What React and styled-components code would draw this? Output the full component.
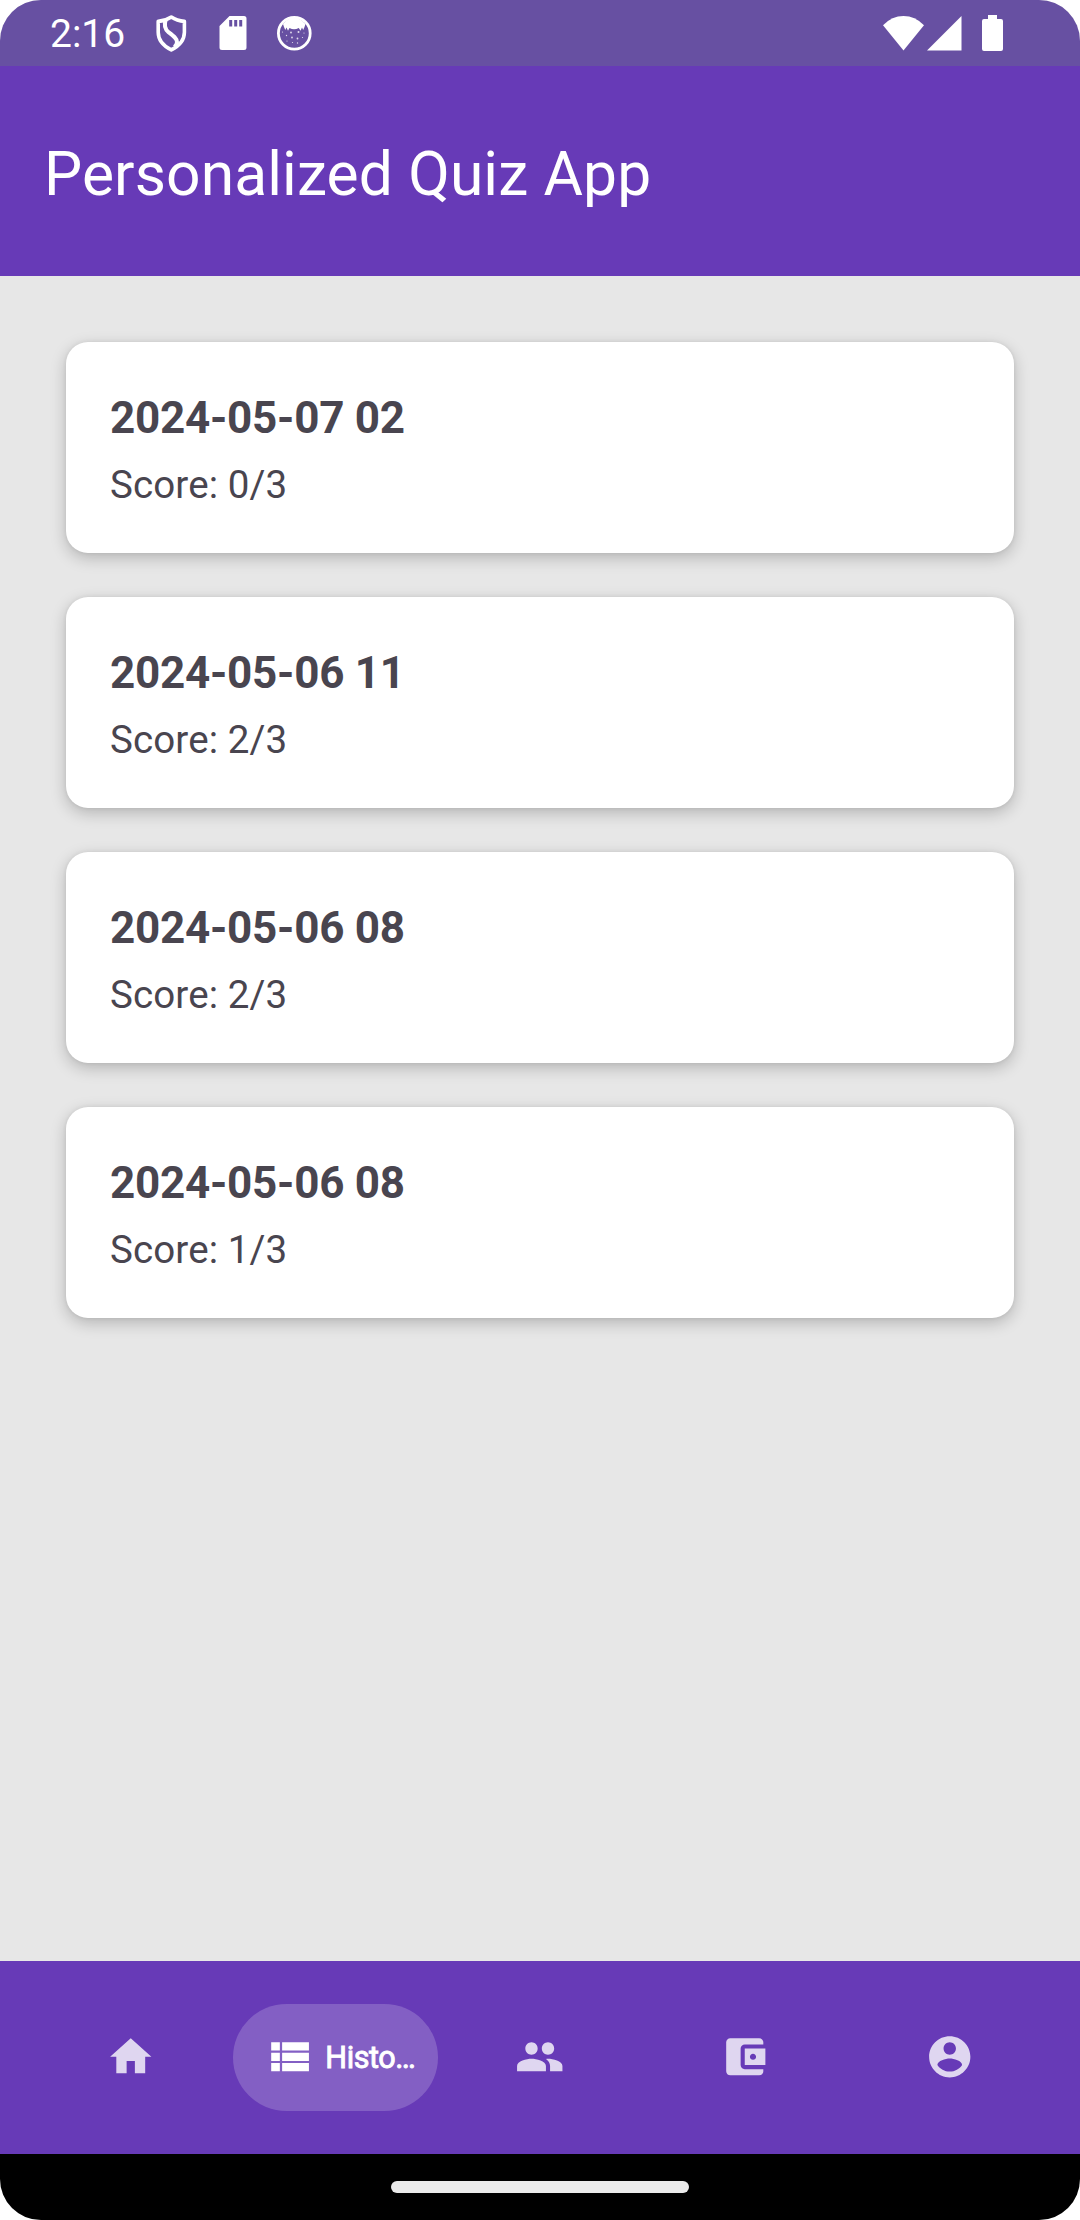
import React from "react";
import styled, { createGlobalStyle } from "styled-components";

const GlobalStyle = createGlobalStyle`
  * { box-sizing: border-box; }
  body { margin: 0; background: #ffffff; font-family: Roboto, "Liberation Sans", sans-serif; }
`;

const Screen = styled.div`
  width: 1080px;
  height: 2220px;
  display: flex;
  flex-direction: column;
  overflow: hidden;
  border-radius: 41px;
  background: #e7e7e7;
`;

const StatusBar = styled.header`
  height: 66px;
  flex: none;
  display: flex;
  align-items: center;
  justify-content: space-between;
  padding: 0 77px 0 50px;
  background: #6750a2;
  color: #ffffff;
`;

const StatusGroup = styled.div`
  display: flex;
  align-items: center;
`;

const Clock = styled.span`
  width: 105px;
  font-size: 39px;
  line-height: 46px;
  padding-top: 2px;
`;

const StatusIcon = styled.svg`
  display: block;
  width: ${(p) => p.$w}px;
  height: ${(p) => p.$h}px;
  margin-left: ${(p) => p.$gap || 0}px;
`;

const AppBar = styled.div`
  height: 210px;
  flex: none;
  display: flex;
  align-items: center;
  padding: 8px 44px 0;
  background: #673ab7;
`;

const Title = styled.h1`
  margin: 0;
  font-size: 60.5px;
  font-weight: 400;
  line-height: 72px;
  letter-spacing: 0.12px;
  color: #ffffff;
`;

const HistoryList = styled.main`
  flex: 1;
  display: flex;
  flex-direction: column;
  gap: 44px;
  padding: 66px;
`;

const Card = styled.article`
  height: 211px;
  padding: 50px 44px 0;
  border-radius: 22px;
  background: #ffffff;
  color: #49454f;
  box-shadow: 0 5px 16px rgba(0, 0, 0, 0.22), 0 0 4px rgba(0, 0, 0, 0.07);
`;

const CardDate = styled.h2`
  margin: 0;
  font-size: 44px;
  font-weight: 700;
  line-height: 52px;
  letter-spacing: -0.25px;
`;

const CardScore = styled.p`
  margin: 18px 0 0;
  font-size: 38.5px;
  line-height: 45px;
  letter-spacing: 0.12px;
`;

const NavBar = styled.nav`
  height: 193px;
  flex: none;
  display: grid;
  grid-template-columns: repeat(5, 204.8px);
  justify-content: center;
  align-items: center;
  background: #673ab7;
`;

const NavItem = styled.a`
  height: 107px;
  display: flex;
  align-items: center;
  justify-content: ${(p) => (p.$active ? "flex-start" : "center")};
  gap: 11px;
  padding: ${(p) => (p.$active ? "0 0 0 32px" : "0")};
  border-radius: 54px;
  background: ${(p) => (p.$active ? "rgba(255, 255, 255, 0.19)" : "transparent")};
  color: ${(p) => (p.$active ? "#ffffff" : "#dfd6f0")};
`;

const NavIcon = styled.svg`
  display: block;
  flex: none;
  width: 49.5px;
  height: 49.5px;
  margin-top: -1px;
  fill: currentColor;
`;

const NavLabel = styled.span`
  font-size: 30.5px;
  font-weight: 400;
  line-height: 36px;
  letter-spacing: -0.4px;
  white-space: nowrap;
  -webkit-text-stroke: 0.9px currentColor;
`;

const GestureBar = styled.footer`
  height: 66px;
  flex: none;
  display: flex;
  align-items: center;
  justify-content: center;
  background: #000000;
`;

const Handle = styled.div`
  width: 298px;
  height: 12px;
  border-radius: 6px;
  background: #ebebeb;
`;

const results = [
  { date: "2024-05-07 02", score: "0/3" },
  { date: "2024-05-06 11", score: "2/3" },
  { date: "2024-05-06 08", score: "2/3" },
  { date: "2024-05-06 08", score: "1/3" },
];

const tabs = [
  { id: "home", path: "M10 20v-6h4v6h5v-8h3L12 3 2 12h3v8z" },
  {
    id: "history",
    label: "Histo…",
    path: "M3 14h4.2v-4H3v4zm0 5h4.2v-4H3v4zM3 9h4.2V5H3v4zm5.300 5H21.300v-4H8.300v4zm0 5H21.300v-4H8.300v4zM8.300 5v4H21.300V5H8.300z",
  },
  {
    id: "friends",
    path: "M16 11c1.66 0 2.99-1.34 2.99-3S17.66 5 16 5c-1.66 0-3 1.34-3 3s1.34 3 3 3zm-8 0c1.66 0 2.99-1.34 2.99-3S9.66 5 8 5C6.34 5 5 6.34 5 8s1.34 3 3 3zm0 2c-2.33 0-7 1.17-7 3.5V19h14v-2.5c0-2.33-4.67-3.5-7-3.5zm8 0c-.29 0-.62.02-.97.05 1.16.84 1.97 1.97 1.97 3.45V19h6v-2.5c0-2.33-4.67-3.5-7-3.5z",
  },
  {
    id: "wallet",
    path: "M21 18v1c0 1.1-.9 2-2 2H5c-1.11 0-2-.9-2-2V5c0-1.1.89-2 2-2h14c1.1 0 2 .9 2 2v1h-9c-1.11 0-2 .9-2 2v8c0 1.1.89 2 2 2h9zm-9-2h10V8H12v8zm4-2.5c-.83 0-1.5-.67-1.5-1.5s.67-1.5 1.5-1.5 1.5.67 1.5 1.5-.67 1.5-1.5 1.5z",
  },
  {
    id: "profile",
    path: "M12 2C6.48 2 2 6.48 2 12s4.48 10 10 10 10-4.48 10-10S17.52 2 12 2zm0 3c1.66 0 3 1.34 3 3s-1.34 3-3 3-3-1.34-3-3 1.34-3 3-3zm0 14.2c-2.5 0-4.71-1.28-6-3.22.03-1.99 4-3.08 6-3.08 1.99 0 5.97 1.09 6 3.08-1.29 1.94-3.5 3.22-6 3.22z",
  },
];

function ShieldIcon() {
  return (
    <StatusIcon $w={32} $h={38} viewBox="0 0 32 38" fill="none" stroke="#fff" strokeWidth="3.6" strokeLinejoin="round">
      <path d="M16.300 3C12.500 5.500 8 7 3.200 7.400v10.800c0 8 5 13.600 13.100 17.700 8.100-4.100 13.100-9.700 13.100-17.700V7.400C24.600 7 20 5.500 16.300 3z" />
      <path d="M10.800 5.500C8.800 11 9.800 15 13.500 18.200C18.500 22 22 24.500 22 28C22 30 21 31.500 19.500 33" strokeWidth="4" />
    </StatusIcon>
  );
}

function CardIcon() {
  return (
    <StatusIcon $w={28} $h={36} $gap={32} viewBox="0 0 28 36" fill="#fff">
      <path fillRule="evenodd" d="M10.500 1H25a2.500 2.500 0 0 1 2.500 2.500V32.500A2.500 2.500 0 0 1 25 35H3A2.500 2.500 0 0 1 .500 32.500V11zM10.200 5v6.500h3V5zm5 0v6.500h3V5zm5 0v6.500h3V5z" />
    </StatusIcon>
  );
}

function FaceIcon() {
  return (
    <StatusIcon $w={36} $h={36} $gap={29} viewBox="0 0 36 36" fill="#fff">
      <circle cx="18.300" cy="18.200" r="15.900" fill="none" stroke="#fff" strokeWidth="2.800" />
      <path d="M7 9Q18-4 29.500 9L28.500 12 27.200 15 26 12.500 24.500 15.800 22.800 13Q18 15.500 13.500 13L12 15.800 10.500 12.500 9.300 15 8 12z" />
      <g fillOpacity="0.8">
        <circle cx="6.500" cy="17" r=".6" />
        <circle cx="15" cy="17.500" r=".9" />
        <circle cx="22.500" cy="17" r="1" />
        <circle cx="28" cy="18" r=".6" />
        <circle cx="10.500" cy="20.500" r=".7" />
        <circle cx="16" cy="22.500" r=".9" />
        <circle cx="21.500" cy="23.500" r=".9" />
        <circle cx="26.500" cy="22.500" r=".6" />
        <circle cx="11" cy="26" r=".6" />
        <circle cx="16.500" cy="27.500" r=".6" />
        <circle cx="21.500" cy="28" r=".7" />
      </g>
    </StatusIcon>
  );
}

export default function App() {
  return (
    <>
      <GlobalStyle />
      <Screen>
        <StatusBar>
          <StatusGroup>
            <Clock>2:16</Clock>
            <ShieldIcon />
            <CardIcon />
            <FaceIcon />
          </StatusGroup>
          <StatusGroup>
            <StatusIcon $w={41} $h={36} viewBox="0 0 41 36" fill="#fff">
              <path d="M20.500 35.500L0 10.200Q9 1 20.500 1T41 10.200z" />
            </StatusIcon>
            <StatusIcon $w={35} $h={36} $gap={3} viewBox="0 0 35 36" fill="#fff">
              <path d="M0 35.500L34.500 1v34.500z" />
            </StatusIcon>
            <StatusIcon $w={21} $h={36} $gap={20} viewBox="0 0 21 36" fill="#fff">
              <path d="M6 0h9v4h4a2 2 0 0 1 2 2v28a2 2 0 0 1-2 2H2a2 2 0 0 1-2-2V6a2 2 0 0 1 2-2h4z" />
            </StatusIcon>
          </StatusGroup>
        </StatusBar>
        <AppBar>
          <Title>Personalized Quiz App</Title>
        </AppBar>
        <HistoryList>
          {results.map((r, i) => (
            <Card key={i}>
              <CardDate>{r.date}</CardDate>
              <CardScore>Score: {r.score}</CardScore>
            </Card>
          ))}
        </HistoryList>
        <NavBar>
          {tabs.map((t) => (
            <NavItem key={t.id} $active={Boolean(t.label)}>
              <NavIcon viewBox="0 0 24 24">
                <path d={t.path} />
              </NavIcon>
              {t.label && <NavLabel>{t.label}</NavLabel>}
            </NavItem>
          ))}
        </NavBar>
        <GestureBar>
          <Handle />
        </GestureBar>
      </Screen>
    </>
  );
}
